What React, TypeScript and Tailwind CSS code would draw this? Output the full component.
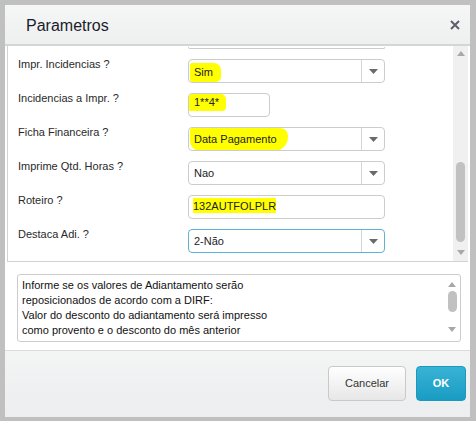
import type { ReactNode } from "react";

function Caret({ className = "" }: { className?: string }) {
  return (
    <svg width="9" height="5" viewBox="0 0 9 5" className={className}>
      <path d="M0 0h9L4.5 5z" fill="currentColor" />
    </svg>
  );
}

function ScrollArrow({ up }: { up?: boolean }) {
  return (
    <svg width="8" height="5" viewBox="0 0 8 5" className="text-[#a8a8a8]">
      <path d={up ? "M0 5h8L4 0z" : "M0 0h8L4 5z"} fill="currentColor" />
    </svg>
  );
}

function Select({ children, focused }: { children: ReactNode; focused?: boolean }) {
  return (
    <div
      className={`flex h-[24px] w-[197px] rounded-[4px] border bg-white ${
        focused ? "border-[#5cb3d6]" : "border-[#cccccc]"
      }`}
    >
      <div className="flex flex-1 items-center overflow-hidden">{children}</div>
      <div
        className={`flex w-[23px] items-center justify-center border-l text-[#6a6a6a] ${
          focused ? "border-[#cfd8dc]" : "border-[#d6d6d6]"
        }`}
      >
        <Caret />
      </div>
    </div>
  );
}

function TextInput({ children, wide }: { children: ReactNode; wide?: boolean }) {
  return (
    <div
      className={`flex h-[24px] items-center overflow-hidden rounded-[4px] border border-[#cccccc] bg-white ${
        wide ? "w-[197px]" : "w-[82px]"
      }`}
    >
      {children}
    </div>
  );
}

function Row({ label, children }: { label: string; children: ReactNode }) {
  return (
    <div className="flex items-start">
      <div className="mt-[-1px] w-[170px] text-[11px] leading-[12px] text-[#2a2a2a]">{label}</div>
      {children}
    </div>
  );
}

export default function App() {
  return (
    <div className="relative h-[423px] w-[476px] overflow-hidden bg-[#c0c0c0] pl-[5px] pr-[6px] pt-[5px] font-['Liberation_Sans',Arial,sans-serif] text-[#222]">
      <div className="flex h-[412px] flex-col bg-white">
        {/* header */}
        <div className="flex h-[41px] items-center justify-between border-b-2 border-[#d4d5d5] bg-gradient-to-b from-[#f5f6f6] to-[#eef0f0] pl-[21px] pr-[10px]">
          <span className="pt-[2px] text-[16px] text-[#1a1c2c]">Parametros</span>
          <svg width="10" height="10" viewBox="0 0 10 10" className="mt-[1px] text-[#5b606b]">
            <path d="M1 1l8 8M9 1l-8 8" stroke="currentColor" strokeWidth="2" />
          </svg>
        </div>

        {/* body */}
        <div className="flex h-[304px] flex-col px-[2px]">
          <div className="flex h-[216px] border-b border-l border-[#d2d2d2]">
            <div className="flex flex-1 flex-col gap-[10px] pl-[10px] pt-[1px]">
              <div className="ml-[170px] h-[2px] w-[197px] rounded-b-[3px] border-x border-b border-[#cccccc]" />
              <Row label="Impr. Incidencias ?">
                <Select>
                  <span className="ml-[1px] mt-[2px] flex h-[19px] w-[31px] items-center rounded-[2px_7px_5px_3px] bg-[#ffff00] pl-[4px] text-[11px]">
                    Sim
                  </span>
                </Select>
              </Row>
              <Row label="Incidencias a Impr. ?">
                <TextInput>
                  <span className="mb-[5px] flex h-[17px] w-[37px] items-center rounded-[1px_5px_4px_1px] bg-[#ffff00] pl-[5px] text-[11px]">
                    1**4*
                  </span>
                </TextInput>
              </Row>
              <Row label="Ficha Financeira ?">
                <Select>
                  <span className="ml-[1px] mt-[1px] flex h-[23px] w-[98px] items-center rounded-[2px_8px_14px_10px] bg-[#ffff00] pl-[4px] text-[11px]">
                    Data Pagamento
                  </span>
                </Select>
              </Row>
              <Row label="Imprime Qtd. Horas ?">
                <Select>
                  <span className="pl-[5px] text-[11px]">Nao</span>
                </Select>
              </Row>
              <Row label="Roteiro ?">
                <TextInput wide>
                  <span className="ml-[4px] mb-[3px] bg-[#ffff00] pt-[1px] text-[11px] leading-[14px]">132AUTFOLPLR</span>
                </TextInput>
              </Row>
              <Row label="Destaca Adi. ?">
                <Select focused>
                  <span className="pl-[5px] text-[11px]">2-Não</span>
                </Select>
              </Row>
            </div>
            {/* scrollbar */}
            <div className="flex w-[15px] flex-col items-center bg-[#f0f0f0] pt-[5px]">
              <ScrollArrow up />
              <div className="mt-[106px] h-[80px] w-[9px] rounded-full bg-[#c1c1c1]" />
              <div className="mt-[8px]">
                <ScrollArrow />
              </div>
            </div>
          </div>

          <div className="pl-[10px] pr-[7px] pt-[12px]">
            <div className="flex h-[68px] overflow-hidden rounded-[3px] border border-[#cccccc] bg-white">
              <div className="flex-1 pl-[4px] pt-[3px] text-[11px] leading-[15px] text-[#111]">
                <div>Informe se os valores de Adiantamento serão</div>
                <div>reposicionados de acordo com a DIRF:</div>
                <div>Valor do desconto do adiantamento será impresso</div>
                <div>como provento e o desconto do mês anterior</div>
                <div>será impresso como desconto do mês atual</div>
              </div>
              <div className="flex w-[16px] flex-col items-center pt-[7px]">
                <ScrollArrow up />
                <div className="mt-[4px] h-[21px] w-[9px] rounded-full bg-[#c1c1c1]" />
                <div className="mt-[15px]">
                  <ScrollArrow />
                </div>
              </div>
            </div>
          </div>
        </div>

        {/* footer */}
        <div className="flex h-[67px] items-start justify-end gap-[10px] border-t border-[#dcdcdc] bg-gradient-to-b from-[#f3f4f4] to-[#eceeef] pr-[4px] pt-[15px]">
          <button className="h-[35px] w-[78px] rounded-[4px] border border-[#c9c9c9] bg-gradient-to-b from-[#ffffff] to-[#e7e7e7] text-[11px] text-[#333]">
            Cancelar
          </button>
          <button className="h-[35px] w-[50px] rounded-[4px] border border-[#1b98bd] bg-gradient-to-b from-[#37b3d5] to-[#189cc3] text-[11px] font-bold text-white">
            OK
          </button>
        </div>
      </div>
      <div className="-ml-[5px] -mr-[6px] mt-[4px] h-[2px] bg-white" />
    </div>
  );
}
